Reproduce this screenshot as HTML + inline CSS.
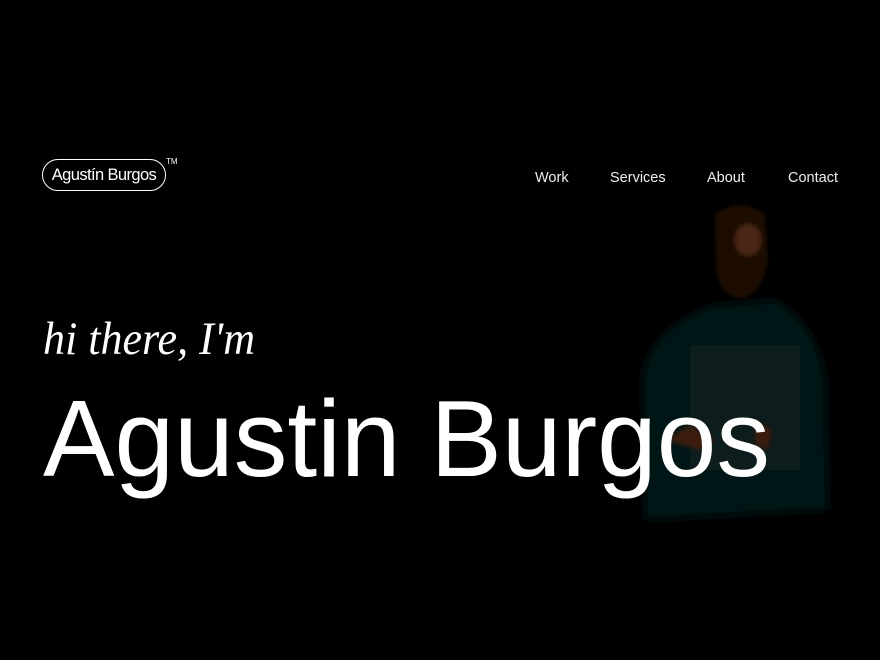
<!DOCTYPE html>
<html><head><meta charset="utf-8"><style>
html,body{margin:0;padding:0;background:#000;width:880px;height:660px;overflow:hidden;position:relative;font-family:"Liberation Sans",sans-serif;color:#fff}
.logo{position:absolute;left:42px;top:159px;width:122px;height:30px;border:1.6px solid #fff;border-radius:17px;font-size:16.5px;line-height:31px;text-align:center;letter-spacing:-0.6px}
.tm{position:absolute;left:166px;top:157px;font-size:8px}
.nav{position:absolute;top:170px;font-size:14.5px;color:#eee}
</style></head><body>
<svg width="880" height="660" style="position:absolute;left:0;top:0">
<defs>
<filter id="b"><feGaussianBlur stdDeviation="5"/></filter>
<filter id="b2"><feGaussianBlur stdDeviation="2"/></filter>
</defs>
<g filter="url(#b)">
<path d="M645 520 L642 380 Q650 325 715 305 L775 300 Q815 320 826 380 L828 510 Z" fill="#061617"/>
<path d="M690 345 L800 345 L800 470 L690 470Z" fill="#081e20" opacity="0.8"/>
</g>
<g filter="url(#b2)">
<path d="M715 215 Q740 195 765 215 L768 260 Q760 300 738 298 Q718 295 716 265Z" fill="#1e0d06"/>
<ellipse cx="748" cy="240" rx="13" ry="16" fill="#4a2818"/>
<ellipse cx="742" cy="280" rx="16" ry="11" fill="#1a0c05"/>
<path d="M665 440 L690 425 L715 440 L700 450Z" fill="#3a1a0e"/>
<path d="M755 420 L772 430 L768 450 L755 445Z" fill="#3a1a0e"/>
</g>
<text x="43" y="354" font-family="Liberation Serif,serif" font-style="italic" font-size="47" fill="#fff" textLength="212" lengthAdjust="spacingAndGlyphs">hi there, I'm</text>
<text x="43" y="476" font-family="Liberation Sans,sans-serif" font-size="109" fill="#fff" textLength="727" lengthAdjust="spacingAndGlyphs">Agustin Burgos</text>
</svg>
<div class="logo">Agustín Burgos</div>
<div class="tm">TM</div>
<div class="nav" style="left:535px">Work</div>
<div class="nav" style="left:610px">Services</div>
<div class="nav" style="left:707px">About</div>
<div class="nav" style="left:788px">Contact</div>
</body></html>
